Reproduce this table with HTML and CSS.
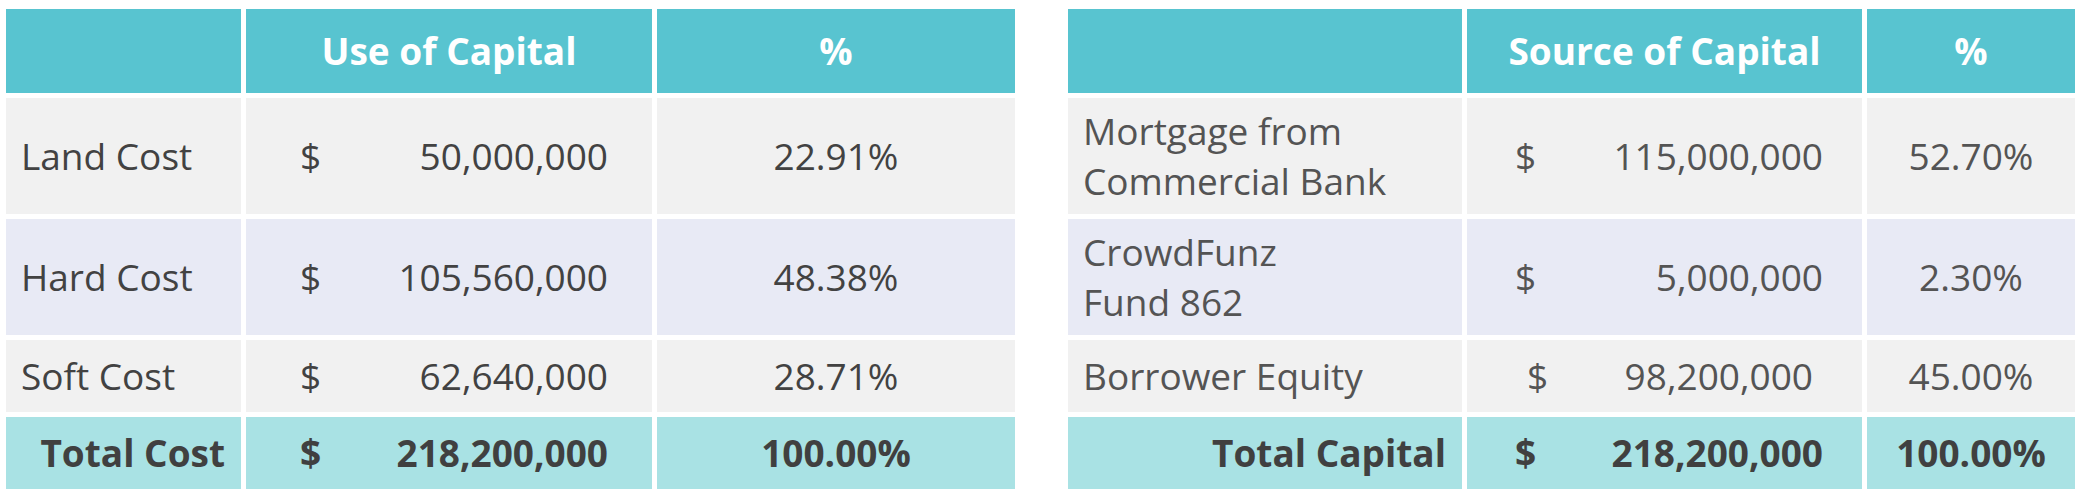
FILE: index.html
```html
<!DOCTYPE html>
<html lang="en">
<head>
<meta charset="utf-8">
<title>Capital Stack</title>
<link rel="stylesheet" href="styles.css">
</head>
<body>
<main class="page">
  <section class="cap-table cap-table--use">
    <div class="cell head"></div>
    <div class="cell head center">Use of Capital</div>
    <div class="cell head center">%</div>

    <div class="cell label row-a">Land Cost</div>
    <div class="cell money row-a"><span>$</span><span>50,000,000</span></div>
    <div class="cell center row-a">22.91%</div>

    <div class="cell label row-b">Hard Cost</div>
    <div class="cell money row-b"><span>$</span><span>105,560,000</span></div>
    <div class="cell center row-b">48.38%</div>

    <div class="cell label row-a">Soft Cost</div>
    <div class="cell money row-a"><span>$</span><span>62,640,000</span></div>
    <div class="cell center row-a">28.71%</div>

    <div class="cell label total right">Total Cost</div>
    <div class="cell money total"><span>$</span><span>218,200,000</span></div>
    <div class="cell center total">100.00%</div>
  </section>

  <section class="cap-table cap-table--source">
    <div class="cell head"></div>
    <div class="cell head center">Source of Capital</div>
    <div class="cell head center">%</div>

    <div class="cell label row-a">Mortgage from<br>Commercial Bank</div>
    <div class="cell money row-a"><span>$</span><span>115,000,000</span></div>
    <div class="cell center row-a">52.70%</div>

    <div class="cell label row-b">CrowdFunz<br>Fund 862</div>
    <div class="cell money row-b"><span>$</span><span>5,000,000</span></div>
    <div class="cell center row-b">2.30%</div>

    <div class="cell label row-a">Borrower Equity</div>
    <div class="cell money money--inset row-a"><span>$</span><span>98,200,000</span></div>
    <div class="cell center row-a">45.00%</div>

    <div class="cell label total right">Total Capital</div>
    <div class="cell money total"><span>$</span><span>218,200,000</span></div>
    <div class="cell center total">100.00%</div>
  </section>
</main>
</body>
</html>
```

FILE: styles.css
```css
html, body {
  margin: 0;
  padding: 0;
  background: #ffffff;
}

.page {
  display: flex;
  align-items: flex-start;
  gap: 53px;
  padding: 9px 0 0 6px;
  font-family: "Open Sans", "Noto Sans", "Liberation Sans", sans-serif;
  font-size: 37px;
  line-height: 50px;
}

.cap-table {
  display: grid;
  gap: 5px;
  grid-template-rows: 84px 116px 116px 72px 72px;
}

.cap-table--use {
  grid-template-columns: 235px 406px 358px;
  color: #424242;
}

.cap-table--source {
  grid-template-columns: 394px 395px 208px;
  color: #545454;
}

.cell {
  display: flex;
  align-items: center;
  box-sizing: border-box;
  white-space: nowrap;
}

.head {
  background: #58c4d0;
  color: #ffffff;
  font-weight: 700;
}

.row-a {
  background: #f1f1f1;
}

.row-b {
  background: #e8eaf5;
}

.total {
  background: #a9e2e4;
  font-weight: 700;
  color: #404040;
}

.center {
  justify-content: center;
}

.label {
  padding-left: 15px;
}

.label.right {
  justify-content: flex-end;
  padding-left: 0;
  padding-right: 16px;
}

.money {
  justify-content: space-between;
}

.cap-table--use .money {
  padding: 0 44px 0 54px;
}

.cap-table--source .money {
  padding: 0 39px 0 48px;
}

.cap-table--source .money--inset {
  padding: 0 49px 0 60px;
}
```
